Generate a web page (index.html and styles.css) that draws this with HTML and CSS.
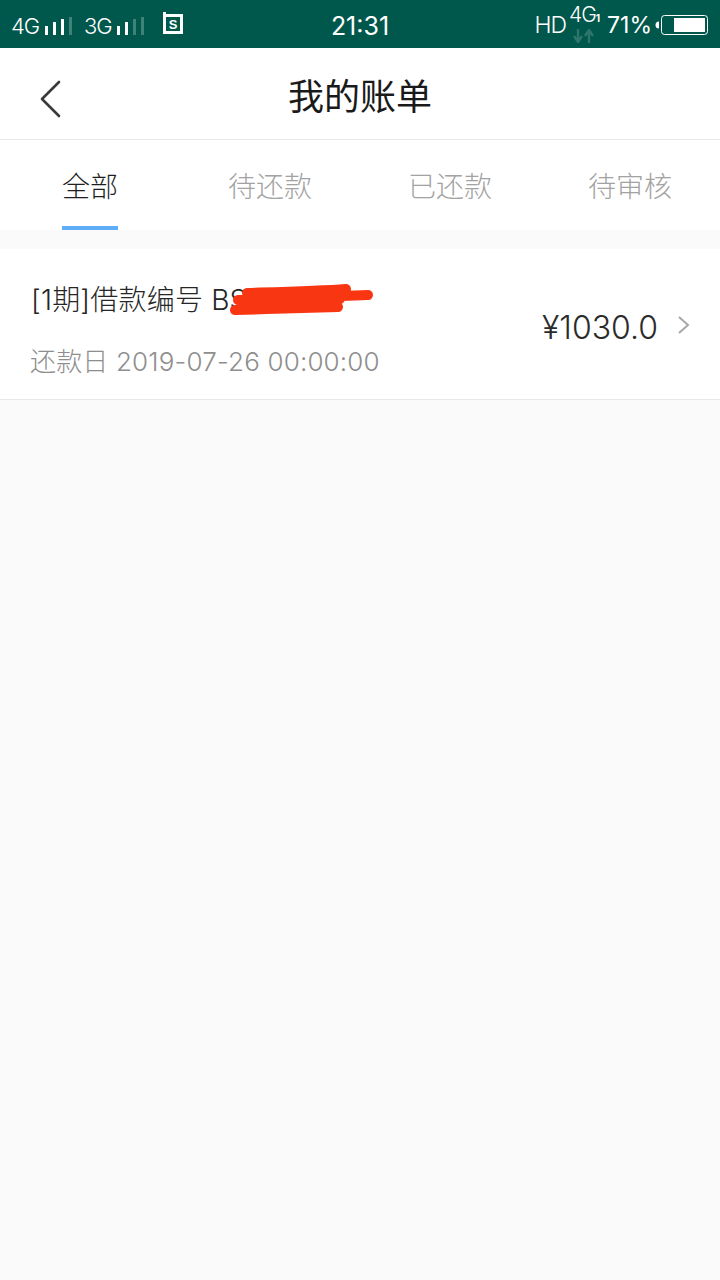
FILE: index.html
```html
<!DOCTYPE html>
<html lang="zh">
<head>
<meta charset="utf-8">
<title>我的账单</title>
<link rel="stylesheet" href="styles.css">
</head>
<body>
<div class="status">
  <div class="st-left">
    <span class="net">4G</span>
    <svg class="bars" width="28" height="18" viewBox="0 0 28 18"><rect x="0" y="9" width="3" height="9" fill="#fff"/><rect x="8" y="5" width="3" height="13" fill="#fff"/><rect x="16" y="2" width="3" height="16" fill="#fff"/><rect x="24" y="0" width="3" height="18" fill="#fff" opacity=".25"/></svg>
    <span class="net net2">3G</span>
    <svg class="bars" width="28" height="18" viewBox="0 0 28 18"><rect x="0" y="9" width="3" height="9" fill="#fff"/><rect x="8" y="5" width="3" height="13" fill="#fff"/><rect x="16" y="2" width="3" height="16" fill="#fff" opacity=".25"/><rect x="24" y="0" width="3" height="18" fill="#fff" opacity=".25"/></svg>
    <svg class="sim" width="20" height="22" viewBox="0 0 20 22"><path d="M1.500 0v3M1.500 3.500h17v17h-17z" fill="none" stroke="#fff" stroke-width="3"/><text x="10" y="17" text-anchor="middle" class="sim-s">S</text></svg>
  </div>
  <div class="st-time">21:31</div>
  <div class="st-right">
    <span class="hd">HD</span>
    <div class="g4">
      <span class="g4t">4G<small>1</small></span>
      <svg width="22" height="14" viewBox="0 0 22 14"><path d="M5 0v12M1 7l4 6 4-6M16 14V2M12 7l4-6 4 6" fill="none" stroke="#fff" stroke-width="2.400" opacity=".18"/></svg>
    </div>
    <span class="pct">71%</span>
    <svg class="batt" width="54" height="20" viewBox="0 0 54 20"><path d="M5 6.500a3 3 0 0 0 0 7z" fill="#fff"/><rect x="7.500" y="0.500" width="46" height="19" rx="3" fill="none" stroke="#fff" stroke-width="1"/><rect x="20" y="3" width="31" height="14" fill="#fff"/></svg>
  </div>
</div>
<header class="nav">
  <svg class="back" width="24" height="38" viewBox="0 0 24 38"><path d="M19 2 L2 19 L19 36" fill="none" stroke="#3a3a3a" stroke-width="2.600" stroke-linecap="round" stroke-linejoin="round"/></svg>
  <h1 class="title">我的账单</h1>
</header>
<nav class="tabs">
  <div class="tab active"><span>全部</span><i class="ink"></i></div>
  <div class="tab"><span>待还款</span></div>
  <div class="tab"><span>已还款</span></div>
  <div class="tab"><span>待审核</span></div>
</nav>
<main class="list">
  <div class="row">
    <div class="info">
      <div class="name">[1期]借款编号 BS<span class="hidden-no">0000000</span>
        <svg class="scrib" width="146" height="34" viewBox="0 0 146 34"><path d="M17 10 C50 9 90 8 116 6 M8 17 C50 15 90 14 138 12 M5 27 C40 26 80 25 108 24 M14 19 C50 20 80 18 110 16" fill="none" stroke="#f93612" stroke-width="10" stroke-linecap="round"/></svg>
      </div>
      <div class="date">还款日 2019-07-26 00:00:00</div>
    </div>
    <div class="amt">¥1030.0</div>
    <svg class="chev" width="14" height="20" viewBox="0 0 14 20"><path d="M2 2 L11 10 L2 18" fill="none" stroke="#a8a8a8" stroke-width="2"/></svg>
  </div>
</main>
</body>
</html>
```
FILE: styles.css
```css
* { box-sizing: border-box; }
html, body { margin: 0; padding: 0; }
body {
  width: 720px; height: 1280px; overflow: hidden;
  background: #fafafa;
  font-family: "Inter", "Noto Sans CJK SC", "Liberation Sans", sans-serif;
  color: #2b2b2b;
}
.status {
  height: 48px; background: #00574b; color: #fff;
  display: grid; grid-template-columns: 1fr auto 1fr; align-items: center;
  font-family: "Inter", "Roboto", sans-serif;
}
.st-left { display: flex; align-items: center; padding-left: 11px; padding-top: 4px; }
.net { font-size: 22px; font-weight: 300; letter-spacing: -1px; width: 34px; }
.net2 { margin-left: 11px; width: 33px; }
.sim { margin-left: 18px; margin-top: -7px; }
.sim-s { font-size: 13px; font-weight: 700; fill: #fff; font-family: "Liberation Sans", sans-serif; }
.st-time { font-size: 25px; font-weight: 400; padding-top: 3px; }
.st-right { display: flex; align-items: center; justify-content: flex-end; padding-right: 12px; padding-top: 2px; }
.hd { font-size: 23px; font-weight: 300; letter-spacing: -1px; }
.g4 { display: flex; flex-direction: column; align-items: center; margin-left: 2px; width: 32px; margin-top: -4px; }
.g4t { font-size: 21px; font-weight: 300; line-height: 21px; letter-spacing: -1px; white-space: nowrap; }
.g4t small { font-size: 10px; font-weight: 700; }
.pct { font-size: 23px; margin-left: 7px; }
.batt { margin-left: 2px; display: block; }
.nav {
  height: 92px; background: #fff; border-bottom: 1px solid #e8e8e8;
  display: flex; align-items: center; justify-content: center; position: relative;
}
.back { position: absolute; left: 40px; top: 32px; }
.title { margin: 0; font-size: 36px; font-weight: 400; color: #1a1a1a; line-height: 1; padding-top: 6px; }
.tabs { height: 90px; background: #fff; display: grid; grid-template-columns: repeat(4, 1fr); }
.tab {
  display: flex; justify-content: center; align-items: flex-start; padding-top: 27px;
  font-size: 28px; line-height: 40px; color: #a2a2a2; position: relative; font-weight: 300;
}
.tab.active { color: #1f1f1f; }
.ink { position: absolute; left: 62px; width: 56px; bottom: 0; height: 4px; background: #5eadf7; }
.list { margin-top: 19px; }
.row {
  height: 151px; background: #fff; border-bottom: 1px solid #e8e8e8;
  display: flex; align-items: center; padding: 0 30px;
}
.info { flex: 1; padding-top: 12px; }
.name { font-size: 28px; line-height: 40px; margin-left: 1px; position: relative; color: #262626; white-space: nowrap; font-weight: 300; letter-spacing: .2px; }
.hidden-no { visibility: hidden; }
.scrib { position: absolute; left: 199px; top: 3px; }
.date { font-size: 26px; line-height: 38px; color: #8e8e8e; margin-top: 23px; white-space: nowrap; font-weight: 300; letter-spacing: .17px; }
.amt { font-size: 32px; color: #2b2b2b; margin-right: 19px; font-weight: 300; padding-top: 6px; }
.chev { margin-right: -1px; margin-top: 2px; }
```
